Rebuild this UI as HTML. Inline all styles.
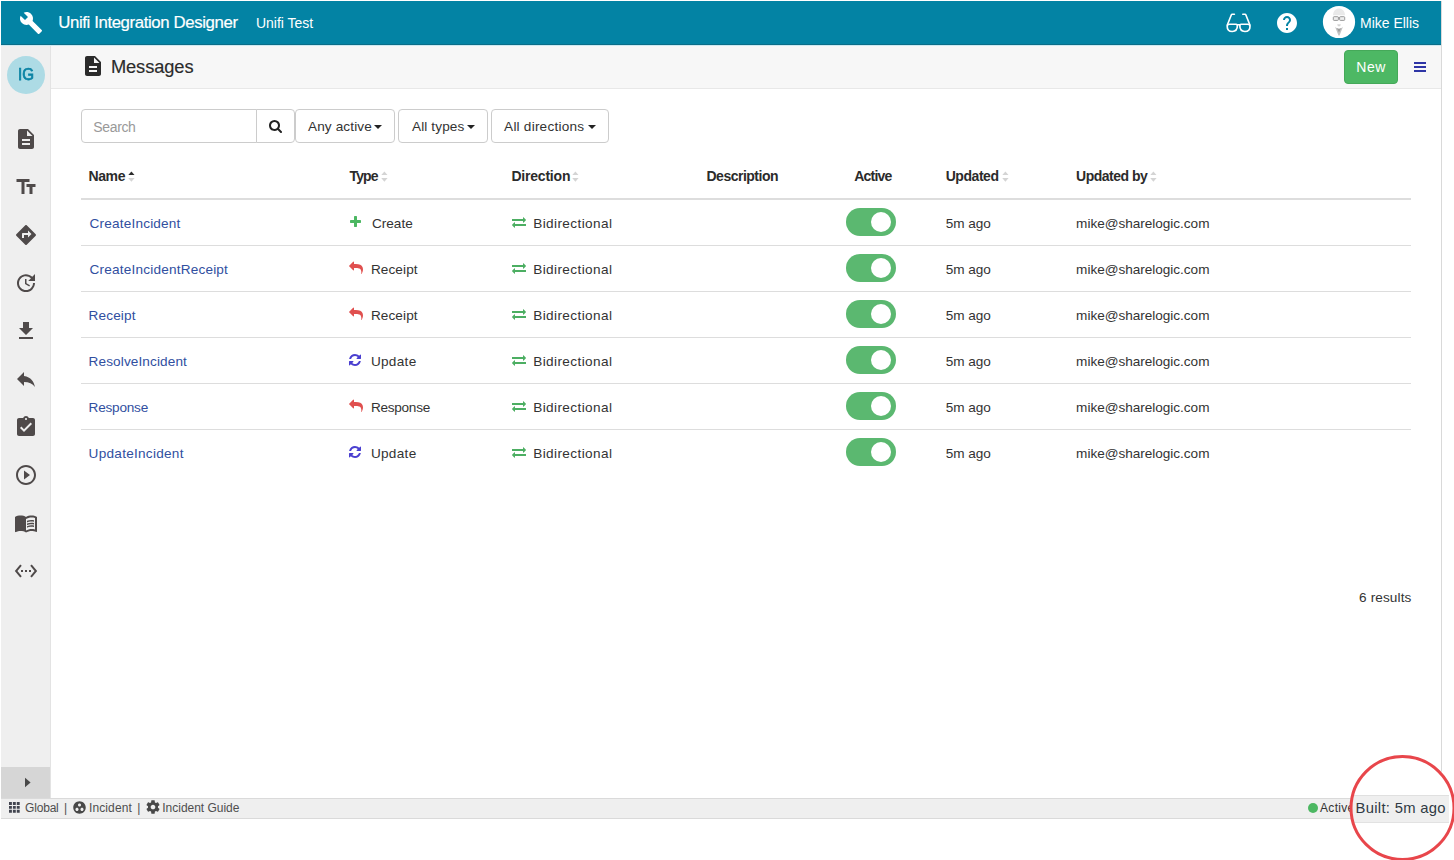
<!DOCTYPE html>
<html lang="en">
<head>
<meta charset="utf-8">
<title>Unifi Integration Designer - Messages</title>
<style>
*{box-sizing:border-box;margin:0;padding:0}
html,body{width:1454px;height:860px;overflow:hidden;background:#fff}
body{position:relative;font-family:"Liberation Sans",sans-serif;font-size:14px;color:#333}
.abs{position:absolute}
.t{position:absolute;white-space:nowrap;line-height:1}
#topbar{position:absolute;left:1px;top:1px;width:1440px;height:44px;background:#0383a4;border-bottom:1px solid #0a6d88}
#topline{position:absolute;left:1px;top:45px;width:1440px;height:1px;background:#cde9f1}
#side{position:absolute;left:1px;top:46px;width:50px;height:752px;background:#efefef;border-right:1px solid #e3e3e3}
#sidebot{position:absolute;left:1px;top:767px;width:49px;height:31px;background:#d6d6d6}
#phead{position:absolute;left:51px;top:46px;width:1390px;height:43px;background:#f7f7f7;border-bottom:1px solid #e8e8e8}
#status{position:absolute;left:1px;top:798px;width:1440px;height:21px;background:#efefef;border-top:1px solid #dadada;border-bottom:1px solid #dadada}
#rborder{position:absolute;left:1441px;top:1px;width:1px;height:818px;background:#d9d9d9}
#igc{position:absolute;left:7px;top:56px;width:38px;height:38px;border-radius:50%;background:#addbe5}
.box{position:absolute;top:109px;height:34px;border:1px solid #ccc;background:#fff}
.caret{position:absolute;top:125px;width:0;height:0;border-top:4px solid #222;border-left:4px solid transparent;border-right:4px solid transparent}
.hl{position:absolute;left:81px;width:1330px;height:1px;background:#ddd}
.tog{position:absolute;left:846px;width:50px;height:28px;border-radius:14px;background:#5bb870}
.tog i{position:absolute;left:25px;top:4px;width:20px;height:20px;border-radius:10px;background:#fff}
#newbtn{position:absolute;left:1344px;top:50px;width:54px;height:34px;border-radius:4px;background:#4db864;border:1px solid #45a959}
.bar{position:absolute;left:1414px;width:12px;height:2px;background:#2e35a6}
#lens{position:absolute;left:1349.5px;top:755px;width:106px;height:106px;border-radius:50%;background:#fff;overflow:hidden}
#lensband{position:absolute;left:0;top:40px;width:99px;height:28px;background:#efefef;border-top:1px solid #e0e0e0;border-bottom:1px solid #e2e2e2}

</style>
</head>
<body>
<div id="topbar"></div>
<div id="topline"></div>
<div id="side"></div>
<div id="sidebot"></div>
<div id="phead"></div>
<div id="status"></div>
<div id="rborder"></div>
<div id="igc"></div>

<!-- search + filters -->
<div class="box" style="left:81px;width:176px;border-radius:4px 0 0 4px"></div>
<div class="box" style="left:256px;width:39px;border-radius:0 4px 4px 0"></div>
<div class="box" style="left:295px;width:100px;border-radius:4px"></div>
<div class="box" style="left:398px;width:90px;border-radius:4px"></div>
<div class="box" style="left:491px;width:118px;border-radius:4px"></div>
<div class="caret" style="left:374px"></div>
<div class="caret" style="left:467px"></div>
<div class="caret" style="left:588px"></div>
<svg class="abs" style="left:269px;top:120.400px" width="13" height="13" viewBox="0 0 1664 1664"><path fill="#222" d="M1152 704q0-185-131.500-316.500T704 256 387.500 387.500 256 704t131.500 316.500T704 1152t316.500-131.500T1152 704zm512 832q0 52-38 90t-90 38q-54 0-90-38l-343-342q-179 124-399 124-143 0-273.500-55.500t-225-150-150-225T0 704t55.500-273.500 150-225 225-150T704 0t273.500 55.500 225 150 150 225T1408 704q0 220-124 399l343 343q37 37 37 90z"/></svg>

<!-- header row line -->
<div class="abs" style="left:81px;top:198px;width:1330px;height:2px;background:#ddd"></div>
<div class="hl" style="top:245px"></div>
<div class="tog" style="top:208px"><i></i></div>
<div class="hl" style="top:291px"></div>
<div class="tog" style="top:254px"><i></i></div>
<div class="hl" style="top:337px"></div>
<div class="tog" style="top:300px"><i></i></div>
<div class="hl" style="top:383px"></div>
<div class="tog" style="top:346px"><i></i></div>
<div class="hl" style="top:429px"></div>
<div class="tog" style="top:392px"><i></i></div>
<div class="tog" style="top:438px"><i></i></div>

<div id="newbtn"></div>
<div class="bar" style="top:62px"></div>
<div class="bar" style="top:66px"></div>
<div class="bar" style="top:70px"></div>


<!-- sort icons -->
<svg class="abs" style="left:128px;top:171px" width="7" height="11" viewBox="0 0 7 11"><path fill="#2b2b2b" d="M0.300 4 L3.400 0.400 L6.500 4z"/><path fill="#d4d4d4" d="M0.200 7 L6.600 7 L3.400 10.700z"/></svg>
<svg class="abs sorti" style="left:380.500px;top:171px" width="7" height="11" viewBox="0 0 7 11"><path fill="#d4d4d4" d="M0.300 4 L3.400 0.400 L6.500 4z M0.200 7 L6.600 7 L3.400 10.700z"/></svg>
<svg class="abs sorti" style="left:572.300px;top:171px" width="7" height="11" viewBox="0 0 7 11"><path fill="#d4d4d4" d="M0.300 4 L3.400 0.400 L6.500 4z M0.200 7 L6.600 7 L3.400 10.700z"/></svg>
<svg class="abs sorti" style="left:1002px;top:171px" width="7" height="11" viewBox="0 0 7 11"><path fill="#d4d4d4" d="M0.300 4 L3.400 0.400 L6.500 4z M0.200 7 L6.600 7 L3.400 10.700z"/></svg>
<svg class="abs sorti" style="left:1150.300px;top:171px" width="7" height="11" viewBox="0 0 7 11"><path fill="#d4d4d4" d="M0.300 4 L3.400 0.400 L6.500 4z M0.200 7 L6.600 7 L3.400 10.700z"/></svg>

<!-- sidebar toggle arrow -->
<svg class="abs" style="left:24px;top:777px" width="8" height="11" viewBox="0 0 8 11"><path fill="#484848" d="M1 0.800 L6.600 5.500 L1 10.200z"/></svg>

<!-- glasses -->
<svg class="abs" style="left:1225px;top:12px" width="28" height="22" viewBox="0 0 28 22" fill="none" stroke="#fff" stroke-width="1.650" stroke-linecap="round" stroke-linejoin="round">
<path d="M2.200 14.500C2.200 12.900 3 12.200 4.600 12.200H11.200C12 12.200 12.400 12.600 12.400 13.600C12.400 17.200 10.400 19.500 7.300 19.500C4.200 19.500 2.200 17.400 2.200 14.500Z"/>
<path d="M25 14.500C25 12.900 24.200 12.200 22.600 12.200H16C15.200 12.200 14.800 12.600 14.800 13.600C14.800 17.200 16.800 19.500 19.900 19.500C23 19.500 25 17.400 25 14.500Z"/>
<path d="M9.400 2.250H7.100Q6.600 2.250 6.400 2.750L2.300 13"/>
<path d="M17.800 2.250H20.100Q20.600 2.250 20.800 2.750L24.900 13"/>
<path d="M12 12.700H15.200"/>
</svg>

<!-- avatar -->
<svg class="abs" style="left:1322px;top:5px" width="34" height="34" viewBox="0 0 34 34">
<defs><filter id="bl" x="-20%" y="-20%" width="140%" height="140%"><feGaussianBlur stdDeviation="0.750"/></filter>
<filter id="bl2" x="-20%" y="-20%" width="140%" height="140%"><feGaussianBlur stdDeviation="0.450"/></filter></defs>
<circle cx="17" cy="17" r="16.100" fill="#fff"/>
<g filter="url(#bl)">
<path d="M11 10.300 C11 5.800 14 3.400 17 3.400 C20 3.400 23 5.800 23 10.300z" fill="#e9e9e9"/>
<path d="M15.200 19.300 h3.600 l-0.700 1.900 h-2.200z" fill="#d4d4d4"/>
<path d="M13 21.800 C14.600 24 19.400 24 21 21.800 L17.500 30.500 L16.500 30.500z" fill="#c4c4c4"/>
<path d="M14.800 23 C16 24.200 18 24.200 19.200 23 L17 27.500z" fill="#9c9c9c"/>
</g>
<g filter="url(#bl2)" fill="#eeeeee" stroke="#8f8f8f" stroke-width="0.900">
<rect x="11.300" y="11.700" width="5.100" height="3.700" rx="0.800"/>
<rect x="17.600" y="11.700" width="5.100" height="3.700" rx="0.800"/>
<path d="M16.400 12.700h1.200"/>
</g>
</svg>

<svg class="abs" style="left:9.300px;top:802.100px" width="10.700" height="10.700" viewBox="0 0 10.700 10.700"><path fill="#41444f" d="M0.0 0.0h2.900v2.900h-2.900zM3.9 0.0h2.900v2.900h-2.900zM7.8 0.0h2.900v2.900h-2.900zM0.0 3.9h2.900v2.900h-2.900zM3.9 3.9h2.900v2.900h-2.900zM7.8 3.9h2.900v2.900h-2.900zM0.0 7.8h2.900v2.900h-2.900zM3.9 7.8h2.900v2.900h-2.900zM7.8 7.8h2.900v2.900h-2.900z"/></svg>
<!-- status active dot -->
<div class="abs" style="left:1307.700px;top:802.800px;width:10.200px;height:10.200px;border-radius:50%;background:#4cb762"></div>

<svg class="abs" style="left:18.5px;top:11px" width="24" height="24" viewBox="0 0 24 24"><path fill="#fff" d="M22.7 19l-9.1-9.1c.9-2.3.4-5-1.500-6.900-2-2-5-2.400-7.400-1.300L9 6 6 9 1.600 4.700C.4 7.100.9 10.100 2.900 12.100c1.900 1.900 4.600 2.400 6.900 1.500l9.100 9.100c.4.4 1 .4 1.400 0l2.300-2.300c.5-.4.5-1.100.1-1.400z"/></svg>
<svg class="abs" style="left:14px;top:127px" width="24" height="24" viewBox="0 0 24 24"><path fill="#4f4a4a" d="M14 2H6c-1.100 0-1.990.9-1.990 2L4 20c0 1.100.890 2 1.990 2H18c1.100 0 2-.9 2-2V8l-6-6zm2 16H8v-2h8v2zm0-4H8v-2h8v2zm-3-5V3.500L18.500 9H13z"/></svg>
<svg class="abs" style="left:14px;top:175px" width="24" height="24" viewBox="0 0 24 24"><path fill="#4f4a4a" d="M2.500 4v3h5v12h3V7h5V4h-13zm19 5h-9v3h3v7h3v-7h3V9z"/></svg>
<svg class="abs" style="left:14px;top:223px" width="24" height="24" viewBox="0 0 24 24"><path fill="#4f4a4a" d="M21.710 11.290l-9-9c-.390-.390-1.020-.390-1.410 0l-9 9c-.390.390-.390 1.020 0 1.410l9 9c.390.390 1.020.390 1.410 0l9-9c.390-.380.390-1.010 0-1.410zM14 14.500V12h-4v3H8v-4c0-.550.450-1 1-1h5V7.500l3.500 3.500-3.500 3.500z"/></svg>
<svg class="abs" style="left:14px;top:271px" width="24" height="24" viewBox="0 0 24 24"><path fill="#4f4a4a" d="M21 10.120h-6.780l2.740-2.820c-2.730-2.700-7.150-2.800-9.880-.100-2.730 2.710-2.730 7.080 0 9.790s7.150 2.710 9.880 0C18.320 15.650 19 14.080 19 12.100h2c0 1.980-.880 4.550-2.640 6.290-3.510 3.480-9.210 3.480-12.720 0-3.500-3.470-3.530-9.110-.020-12.580s9.140-3.470 12.650 0L21 3v7.120zM12.500 8v4.250l3.500 2.080-.720 1.210L11 13V8h1.500z"/></svg>
<svg class="abs" style="left:14px;top:319px" width="24" height="24" viewBox="0 0 24 24"><path fill="#4f4a4a" d="M19 9h-4V3H9v6H5l7 7 7-7zM5 18v2h14v-2H5z"/></svg>
<svg class="abs" style="left:14px;top:367px" width="24" height="24" viewBox="0 0 24 24"><path fill="#4f4a4a" d="M10 9V5l-7 7 7 7v-4.100c5 0 8.500 1.600 11 5.100-1-5-4-10-11-11z"/></svg>
<svg class="abs" style="left:14px;top:415px" width="24" height="24" viewBox="0 0 24 24"><path fill="#4f4a4a" d="M19 3h-4.180C14.400 1.840 13.300 1 12 1c-1.300 0-2.400.840-2.820 2H5c-1.100 0-2 .9-2 2v14c0 1.100.9 2 2 2h14c1.100 0 2-.9 2-2V5c0-1.100-.9-2-2-2zm-7 0c.550 0 1 .450 1 1s-.450 1-1 1-1-.450-1-1 .450-1 1-1zm-2 14l-4-4 1.410-1.410L10 14.170l6.590-6.590L18 9l-8 8z"/></svg>
<svg class="abs" style="left:14px;top:463px" width="24" height="24" viewBox="0 0 24 24"><path fill="#4f4a4a" d="M10 16.500l6-4.500-6-4.500v9zM12 2C6.480 2 2 6.480 2 12s4.480 10 10 10 10-4.480 10-10S17.520 2 12 2zm0 18c-4.410 0-8-3.590-8-8s3.590-8 8-8 8 3.590 8 8-3.590 8-8 8z"/></svg>
<svg class="abs" style="left:14px;top:511px" width="24" height="24" viewBox="0 0 24 24"><path fill="#4f4a4a" d="M21 5c-1.110-.350-2.330-.500-3.500-.500-1.950 0-4.050.4-5.500 1.500-1.450-1.100-3.550-1.500-5.500-1.500S2.450 4.900 1 6v14.650c0 .250.250.5.5.5.1 0 .150-.050.250-.050C3.100 20.450 5.050 20 6.500 20c1.950 0 4.050.4 5.500 1.500 1.350-.850 3.800-1.500 5.500-1.500 1.650 0 3.350.3 4.750 1.050.1.050.150.050.250.050.250 0 .5-.250.5-.5V6c-.6-.450-1.250-.750-2-1zm0 13.500c-1.100-.350-2.300-.5-3.500-.5-1.700 0-4.150.650-5.500 1.500V8c1.350-.850 3.800-1.500 5.500-1.500 1.200 0 2.400.150 3.500.5v11.500z M17.500 10.500c.880 0 1.730.090 2.500.260V9.240c-.790-.150-1.640-.240-2.500-.240-1.700 0-3.240.290-4.500.830v1.660c1.130-.640 2.700-.990 4.500-.990z M13 12.490v1.660c1.130-.640 2.700-.990 4.500-.990.880 0 1.730.090 2.500.260V11.900c-.790-.150-1.640-.240-2.500-.240-1.700 0-3.240.3-4.500.830z M17.500 14.330c-1.700 0-3.240.290-4.500.830v1.660c1.130-.640 2.700-.990 4.500-.990.880 0 1.730.090 2.500.260v-1.520c-.790-.160-1.640-.240-2.500-.240z"/></svg>
<svg class="abs" style="left:14px;top:559px" width="24" height="24" viewBox="0 0 24 24"><path fill="#4f4a4a" d="M7.770 6.760L6.230 5.480.820 12l5.410 6.520 1.540-1.280L3.420 12l4.350-5.240zM7 13h2v-2H7v2zm10-2h-2v2h2v-2zm-6 2h2v-2h-2v2zm6.770-7.520l-1.540 1.280L20.580 12l-4.350 5.240 1.540 1.280L23.180 12l-5.410-6.520z"/></svg>
<svg class="abs" style="left:80.9px;top:54px" width="24" height="24" viewBox="0 0 24 24"><path fill="#2b2b2b" d="M14 2H6c-1.100 0-1.990.9-1.990 2L4 20c0 1.100.890 2 1.990 2H18c1.100 0 2-.9 2-2V8l-6-6zm2 16H8v-2h8v2zm0-4H8v-2h8v2zm-3-5V3.500L18.500 9H13z"/></svg>
<svg class="abs" style="left:1274.9px;top:10.8px" width="24" height="24" viewBox="0 0 24 24"><path fill="#fff" d="M12 2C6.480 2 2 6.480 2 12s4.480 10 10 10 10-4.480 10-10S17.520 2 12 2zm1 17h-2v-2h2v2zm2.070-7.750l-.9.920C13.450 12.900 13 13.500 13 15h-2v-.5c0-1.100.450-2.100 1.170-2.830l1.240-1.260c.370-.360.590-.860.590-1.410 0-1.100-.9-2-2-2s-2 .9-2 2H8c0-2.210 1.790-4 4-4s4 1.790 4 4c0 .880-.360 1.680-.930 2.250z"/></svg>
<svg class="abs" style="left:71.9px;top:799.7px" width="15" height="15" viewBox="0 0 24 24"><path fill="#484848" d="M12 2C6.480 2 2 6.480 2 12s4.480 10 10 10 10-4.480 10-10S17.520 2 12 2zM8 17.500c-1.380 0-2.500-1.120-2.500-2.500s1.120-2.500 2.500-2.500 2.500 1.120 2.500 2.500-1.120 2.500-2.500 2.500zM9.500 8c0-1.380 1.120-2.500 2.500-2.500s2.500 1.120 2.500 2.500-1.120 2.500-2.500 2.500S9.500 9.380 9.500 8zm6.500 9.500c-1.380 0-2.500-1.120-2.500-2.500s1.120-2.500 2.500-2.500 2.500 1.120 2.500 2.500-1.120 2.500-2.500 2.500z"/></svg>
<svg class="abs" style="left:144.6px;top:799.3px" width="16" height="16" viewBox="0 0 24 24"><path fill="#484848" d="M19.430 12.980c.040-.320.070-.640.070-.980s-.030-.660-.070-.980l2.110-1.650c.190-.150.240-.420.120-.640l-2-3.460c-.120-.220-.390-.3-.610-.220l-2.490 1c-.520-.4-1.080-.730-1.690-.980l-.380-2.650C14.460 2.180 14.250 2 14 2h-4c-.250 0-.460.180-.490.420l-.380 2.650c-.610.250-1.170.590-1.690.980l-2.490-1c-.230-.090-.490 0-.610.220l-2 3.460c-.130.220-.070.490.120.640l2.110 1.650c-.040.320-.070.650-.070.980s.030.660.070.980l-2.110 1.650c-.190.150-.240.420-.120.640l2 3.460c.120.220.390.3.610.220l2.490-1c.520.4 1.080.730 1.690.980l.380 2.650c.030.240.240.420.490.420h4c.250 0 .460-.180.490-.420l.380-2.650c.610-.250 1.170-.590 1.690-.980l2.490 1c.230.090.490 0 .610-.220l2-3.460c.120-.220.070-.490-.120-.640l-2.110-1.650zM12 15.500c-1.930 0-3.500-1.570-3.500-3.500s1.570-3.500 3.500-3.500 3.500 1.570 3.500 3.500-1.570 3.500-3.500 3.500z"/></svg>
<svg class="abs" style="left:349.5px;top:216px" width="11.00" height="11.00" viewBox="0 0 1408 1408"><path fill="#4cb762" d="M1408 608v192q0 40-28 68t-68 28H896v416q0 40-28 68t-68 28H608q-40 0-68-28t-28-68V896H96q-40 0-68-28T0 800V608q0-40 28-68t68-28h416V96q0-40 28-68t68-28h192q40 0 68 28t28 68v416h416q40 0 68 28t28 68z"/></svg>
<svg class="abs" style="left:511.8px;top:215.05px" width="14.00" height="14.00" viewBox="0 0 1792 1792"><path fill="#4cae62" d="M1792 1184v192q0 13-9.500 22.500t-22.500 9.500H384v192q0 13-9.500 22.500T352 1632q-12 0-24-10L9 1302q-9-9-9-22 0-14 9-23l320-320q9-9 23-9 13 0 22.500 9.500T384 960v192h1376q13 0 22.500 9.500t9.500 22.500zm0-544q0 14-9 23l-320 320q-9 9-23 9-13 0-22.500-9.500T1408 960V768H32q-13 0-22.500-9.500T0 736V544q0-13 9.500-22.500T32 512h1376V320q0-14 9-23t23-9q12 0 24 10l319 319q9 9 9 23z"/></svg>
<svg class="abs" style="left:349px;top:260.8px" width="14.00" height="14.00" viewBox="0 0 1792 1792"><path fill="#e0504f" d="M1792 1120q0 166-127 451-3 7-10.500 24t-13.500 30-13 22q-12 17-28 17-15 0-23.500-10t-8.500-25q0-9 2.500-26.500t2.500-23.500q5-68 5-123 0-101-17.500-181t-48.500-138.500-80-101-105.500-69.500-133-42.500-154-21.500-175.500-6H640v256q0 26-19 45t-45 19-45-19L19 685Q0 666 0 640t19-45L531 83q19-19 45-19t45 19 19 45v256h224q713 0 875 403 53 134 53 333z"/></svg>
<svg class="abs" style="left:511.8px;top:261.05px" width="14.00" height="14.00" viewBox="0 0 1792 1792"><path fill="#4cae62" d="M1792 1184v192q0 13-9.500 22.500t-22.500 9.500H384v192q0 13-9.500 22.500T352 1632q-12 0-24-10L9 1302q-9-9-9-22 0-14 9-23l320-320q9-9 23-9 13 0 22.500 9.500T384 960v192h1376q13 0 22.500 9.500t9.500 22.500zm0-544q0 14-9 23l-320 320q-9 9-23 9-13 0-22.500-9.500T1408 960V768H32q-13 0-22.500-9.500T0 736V544q0-13 9.500-22.500T32 512h1376V320q0-14 9-23t23-9q12 0 24 10l319 319q9 9 9 23z"/></svg>
<svg class="abs" style="left:349px;top:306.8px" width="14.00" height="14.00" viewBox="0 0 1792 1792"><path fill="#e0504f" d="M1792 1120q0 166-127 451-3 7-10.500 24t-13.500 30-13 22q-12 17-28 17-15 0-23.500-10t-8.500-25q0-9 2.500-26.500t2.500-23.500q5-68 5-123 0-101-17.500-181t-48.500-138.500-80-101-105.500-69.500-133-42.500-154-21.500-175.500-6H640v256q0 26-19 45t-45 19-45-19L19 685Q0 666 0 640t19-45L531 83q19-19 45-19t45 19 19 45v256h224q713 0 875 403 53 134 53 333z"/></svg>
<svg class="abs" style="left:511.8px;top:307.05px" width="14.00" height="14.00" viewBox="0 0 1792 1792"><path fill="#4cae62" d="M1792 1184v192q0 13-9.500 22.500t-22.500 9.500H384v192q0 13-9.500 22.500T352 1632q-12 0-24-10L9 1302q-9-9-9-22 0-14 9-23l320-320q9-9 23-9 13 0 22.500 9.500T384 960v192h1376q13 0 22.500 9.500t9.500 22.500zm0-544q0 14-9 23l-320 320q-9 9-23 9-13 0-22.500-9.500T1408 960V768H32q-13 0-22.500-9.500T0 736V544q0-13 9.500-22.500T32 512h1376V320q0-14 9-23t23-9q12 0 24 10l319 319q9 9 9 23z"/></svg>
<svg class="abs" style="left:348.8px;top:354px" width="12.00" height="12.00" viewBox="0 0 1536 1536"><path fill="#4a3fd0" d="M1511 928q0 5-1 7-64 268-268 434.500T764 1536q-146 0-282.500-55T238 1324l-129 129q-19 19-45 19t-45-19-19-45V960q0-26 19-45t45-19h448q26 0 45 19t19 45-19 45l-137 137q71 66 161 102t187 36q134 0 250-65t186-179q11-17 53-117 8-23 30-23h192q13 0 22.500 9.500t9.500 22.500zm25-800v448q0 26-19 45t-45 19h-448q-26 0-45-19t-19-45 19-45l138-138Q969 256 768 256q-134 0-250 65T332 500q-11 17-53 117-8 23-30 23H50q-13 0-22.500-9.500T18 608v-7q65-268 270-434.500T768 0q146 0 284 55.500T1297 212l130-129q19-19 45-19t45 19 19 45z"/></svg>
<svg class="abs" style="left:511.8px;top:353.05px" width="14.00" height="14.00" viewBox="0 0 1792 1792"><path fill="#4cae62" d="M1792 1184v192q0 13-9.500 22.500t-22.500 9.500H384v192q0 13-9.500 22.500T352 1632q-12 0-24-10L9 1302q-9-9-9-22 0-14 9-23l320-320q9-9 23-9 13 0 22.500 9.500T384 960v192h1376q13 0 22.500 9.500t9.500 22.500zm0-544q0 14-9 23l-320 320q-9 9-23 9-13 0-22.500-9.500T1408 960V768H32q-13 0-22.500-9.500T0 736V544q0-13 9.500-22.500T32 512h1376V320q0-14 9-23t23-9q12 0 24 10l319 319q9 9 9 23z"/></svg>
<svg class="abs" style="left:349px;top:398.8px" width="14.00" height="14.00" viewBox="0 0 1792 1792"><path fill="#e0504f" d="M1792 1120q0 166-127 451-3 7-10.500 24t-13.500 30-13 22q-12 17-28 17-15 0-23.500-10t-8.500-25q0-9 2.500-26.500t2.500-23.500q5-68 5-123 0-101-17.500-181t-48.500-138.500-80-101-105.500-69.500-133-42.500-154-21.500-175.500-6H640v256q0 26-19 45t-45 19-45-19L19 685Q0 666 0 640t19-45L531 83q19-19 45-19t45 19 19 45v256h224q713 0 875 403 53 134 53 333z"/></svg>
<svg class="abs" style="left:511.8px;top:399.05px" width="14.00" height="14.00" viewBox="0 0 1792 1792"><path fill="#4cae62" d="M1792 1184v192q0 13-9.500 22.500t-22.500 9.500H384v192q0 13-9.500 22.500T352 1632q-12 0-24-10L9 1302q-9-9-9-22 0-14 9-23l320-320q9-9 23-9 13 0 22.500 9.500T384 960v192h1376q13 0 22.500 9.500t9.500 22.500zm0-544q0 14-9 23l-320 320q-9 9-23 9-13 0-22.500-9.500T1408 960V768H32q-13 0-22.500-9.500T0 736V544q0-13 9.500-22.500T32 512h1376V320q0-14 9-23t23-9q12 0 24 10l319 319q9 9 9 23z"/></svg>
<svg class="abs" style="left:348.8px;top:446px" width="12.00" height="12.00" viewBox="0 0 1536 1536"><path fill="#4a3fd0" d="M1511 928q0 5-1 7-64 268-268 434.500T764 1536q-146 0-282.500-55T238 1324l-129 129q-19 19-45 19t-45-19-19-45V960q0-26 19-45t45-19h448q26 0 45 19t19 45-19 45l-137 137q71 66 161 102t187 36q134 0 250-65t186-179q11-17 53-117 8-23 30-23h192q13 0 22.500 9.500t9.500 22.500zm25-800v448q0 26-19 45t-45 19h-448q-26 0-45-19t-19-45 19-45l138-138Q969 256 768 256q-134 0-250 65T332 500q-11 17-53 117-8 23-30 23H50q-13 0-22.500-9.500T18 608v-7q65-268 270-434.500T768 0q146 0 284 55.500T1297 212l130-129q19-19 45-19t45 19 19 45z"/></svg>
<svg class="abs" style="left:511.8px;top:445.05px" width="14.00" height="14.00" viewBox="0 0 1792 1792"><path fill="#4cae62" d="M1792 1184v192q0 13-9.500 22.500t-22.500 9.500H384v192q0 13-9.500 22.500T352 1632q-12 0-24-10L9 1302q-9-9-9-22 0-14 9-23l320-320q9-9 23-9 13 0 22.500 9.500T384 960v192h1376q13 0 22.500 9.500t9.500 22.500zm0-544q0 14-9 23l-320 320q-9 9-23 9-13 0-22.500-9.500T1408 960V768H32q-13 0-22.500-9.500T0 736V544q0-13 9.500-22.500T32 512h1376V320q0-14 9-23t23-9q12 0 24 10l319 319q9 9 9 23z"/></svg>

<div class="t" id="title" style="left:58.2px;top:15px;font-size:16.8px;color:#ffffff;letter-spacing:-0.38px;-webkit-text-stroke:0.2px #fff;">Unifi Integration Designer</div>
<div class="t" id="inst" style="left:256px;top:16px;font-size:14px;color:#ffffff;letter-spacing:-0.02px;">Unifi Test</div>
<div class="t" id="user" style="left:1360px;top:16px;font-size:14px;color:#ffffff;letter-spacing:-0.01px;">Mike Ellis</div>
<div class="t" id="ig" style="left:18.1px;top:66px;font-size:16.4px;color:#0b83a4;-webkit-text-stroke:0.75px #0b83a4;transform:scaleX(0.923);transform-origin:0 0;">IG</div>
<div class="t" id="msgs" style="left:110.9px;top:58px;font-size:18.3px;color:#2b2b2b;letter-spacing:-0.09px;-webkit-text-stroke:0.15px #2b2b2b;">Messages</div>
<div class="t" id="new" style="left:1356.3px;top:60px;font-size:14px;color:#ffffff;letter-spacing:0.55px;">New</div>
<div class="t" id="search" style="left:93.3px;top:120px;font-size:14px;color:#999999;letter-spacing:-0.36px;">Search</div>
<div class="t" id="f1" style="left:308px;top:120px;font-size:13.6px;color:#333333;letter-spacing:0.12px;">Any active</div>
<div class="t" id="f2" style="left:412px;top:120px;font-size:13.6px;color:#333333;letter-spacing:0.12px;">All types</div>
<div class="t" id="f3" style="left:504.1px;top:120px;font-size:13.6px;color:#333333;letter-spacing:0.22px;">All directions</div>
<div class="t" id="h1" style="left:88.4px;top:169px;font-size:14px;color:#2b2b2b;font-weight:bold;letter-spacing:-0.37px;">Name</div>
<div class="t" id="h2" style="left:349.6px;top:169px;font-size:14px;color:#2b2b2b;font-weight:bold;letter-spacing:-0.93px;">Type</div>
<div class="t" id="h3" style="left:511.4px;top:169px;font-size:14px;color:#2b2b2b;font-weight:bold;letter-spacing:-0.2px;">Direction</div>
<div class="t" id="h4" style="left:706.5px;top:169px;font-size:14px;color:#2b2b2b;font-weight:bold;letter-spacing:-0.5px;">Description</div>
<div class="t" id="h5" style="left:854.3px;top:169px;font-size:14px;color:#2b2b2b;font-weight:bold;letter-spacing:-0.8px;">Active</div>
<div class="t" id="h6" style="left:945.7px;top:169px;font-size:14px;color:#2b2b2b;font-weight:bold;letter-spacing:-0.45px;">Updated</div>
<div class="t" id="h7" style="left:1076.1px;top:169px;font-size:14px;color:#2b2b2b;font-weight:bold;letter-spacing:-0.5px;">Updated by</div>
<div class="t" id="res" style="left:1359.1px;top:591px;font-size:13.6px;color:#333333;letter-spacing:0.11px;">6 results</div>
<div class="t" id="s1" style="left:25px;top:802px;font-size:12px;color:#4e4e4e;letter-spacing:-0.18px;">Global</div>
<div class="t" id="sp1" style="left:64.0px;top:802px;font-size:12px;color:#4e4e4e;">|</div>
<div class="t" id="s2" style="left:89px;top:802px;font-size:12px;color:#4e4e4e;letter-spacing:0.11px;">Incident</div>
<div class="t" id="sp2" style="left:137.3px;top:802px;font-size:12px;color:#4e4e4e;">|</div>
<div class="t" id="s3" style="left:162.3px;top:802px;font-size:12px;color:#4e4e4e;letter-spacing:-0.02px;">Incident Guide</div>
<div class="t" id="s4" style="left:1320px;top:802px;font-size:12px;color:#333;letter-spacing:0.32px;">Active</div>
<div class="t" id="n0" style="left:89.6px;top:217px;font-size:13.6px;color:#314f9f;letter-spacing:0.18px;">CreateIncident</div>
<div class="t" id="t0" style="left:371.9px;top:217px;font-size:13.6px;color:#333333;letter-spacing:0.02px;">Create</div>
<div class="t" id="d0" style="left:533.2px;top:217px;font-size:13.6px;color:#333333;letter-spacing:0.39px;">Bidirectional</div>
<div class="t" id="u0" style="left:945.7px;top:217px;font-size:13.6px;color:#333333;letter-spacing:-0.04px;">5m ago</div>
<div class="t" id="b0" style="left:1076.1px;top:217px;font-size:13.6px;color:#333333;letter-spacing:-0.03px;">mike@sharelogic.com</div>
<div class="t" id="n1" style="left:89.6px;top:263px;font-size:13.6px;color:#314f9f;letter-spacing:0.19px;">CreateIncidentReceipt</div>
<div class="t" id="t1" style="left:370.9px;top:263px;font-size:13.6px;color:#333333;letter-spacing:0.1px;">Receipt</div>
<div class="t" id="d1" style="left:533.2px;top:263px;font-size:13.6px;color:#333333;letter-spacing:0.39px;">Bidirectional</div>
<div class="t" id="u1" style="left:945.7px;top:263px;font-size:13.6px;color:#333333;letter-spacing:-0.04px;">5m ago</div>
<div class="t" id="b1" style="left:1076.1px;top:263px;font-size:13.6px;color:#333333;letter-spacing:-0.03px;">mike@sharelogic.com</div>
<div class="t" id="n2" style="left:88.6px;top:309px;font-size:13.6px;color:#314f9f;letter-spacing:0.13px;">Receipt</div>
<div class="t" id="t2" style="left:370.9px;top:309px;font-size:13.6px;color:#333333;letter-spacing:0.1px;">Receipt</div>
<div class="t" id="d2" style="left:533.2px;top:309px;font-size:13.6px;color:#333333;letter-spacing:0.39px;">Bidirectional</div>
<div class="t" id="u2" style="left:945.7px;top:309px;font-size:13.6px;color:#333333;letter-spacing:-0.04px;">5m ago</div>
<div class="t" id="b2" style="left:1076.1px;top:309px;font-size:13.6px;color:#333333;letter-spacing:-0.03px;">mike@sharelogic.com</div>
<div class="t" id="n3" style="left:88.6px;top:355px;font-size:13.6px;color:#314f9f;letter-spacing:0.11px;">ResolveIncident</div>
<div class="t" id="t3" style="left:370.9px;top:355px;font-size:13.6px;color:#333333;letter-spacing:0.3px;">Update</div>
<div class="t" id="d3" style="left:533.2px;top:355px;font-size:13.6px;color:#333333;letter-spacing:0.39px;">Bidirectional</div>
<div class="t" id="u3" style="left:945.7px;top:355px;font-size:13.6px;color:#333333;letter-spacing:-0.04px;">5m ago</div>
<div class="t" id="b3" style="left:1076.1px;top:355px;font-size:13.6px;color:#333333;letter-spacing:-0.03px;">mike@sharelogic.com</div>
<div class="t" id="n4" style="left:88.6px;top:401px;font-size:13.6px;color:#314f9f;letter-spacing:-0.23px;">Response</div>
<div class="t" id="t4" style="left:370.9px;top:401px;font-size:13.6px;color:#333333;letter-spacing:-0.27px;">Response</div>
<div class="t" id="d4" style="left:533.2px;top:401px;font-size:13.6px;color:#333333;letter-spacing:0.39px;">Bidirectional</div>
<div class="t" id="u4" style="left:945.7px;top:401px;font-size:13.6px;color:#333333;letter-spacing:-0.04px;">5m ago</div>
<div class="t" id="b4" style="left:1076.1px;top:401px;font-size:13.6px;color:#333333;letter-spacing:-0.03px;">mike@sharelogic.com</div>
<div class="t" id="n5" style="left:88.6px;top:447px;font-size:13.6px;color:#314f9f;letter-spacing:0.26px;">UpdateIncident</div>
<div class="t" id="t5" style="left:370.9px;top:447px;font-size:13.6px;color:#333333;letter-spacing:0.3px;">Update</div>
<div class="t" id="d5" style="left:533.2px;top:447px;font-size:13.6px;color:#333333;letter-spacing:0.39px;">Bidirectional</div>
<div class="t" id="u5" style="left:945.7px;top:447px;font-size:13.6px;color:#333333;letter-spacing:-0.04px;">5m ago</div>
<div class="t" id="b5" style="left:1076.1px;top:447px;font-size:13.6px;color:#333333;letter-spacing:-0.03px;">mike@sharelogic.com</div>

<div id="lens"><div id="lensband"></div></div>
<div class="t" id="built" style="left:1355.6px;top:801px;font-size:14.8px;color:#2f3a44;letter-spacing:0.29px;">Built: 5m ago</div>
<svg class="abs" style="left:1345px;top:750px" width="109" height="110" viewBox="0 0 109 110"><circle cx="57.500" cy="58" r="51.500" fill="none" stroke="#e8464b" stroke-width="3"/></svg>
</body>
</html>
